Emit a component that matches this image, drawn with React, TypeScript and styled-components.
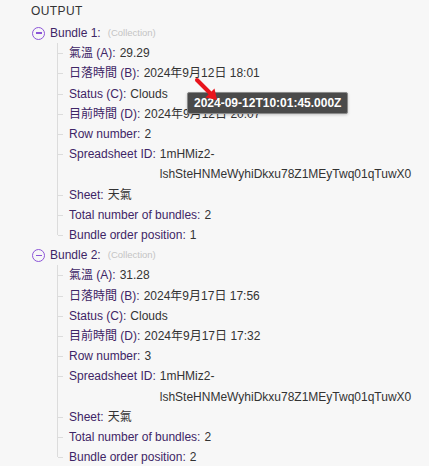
import * as React from 'react';
import styled, { createGlobalStyle } from 'styled-components';

const GlobalStyle = createGlobalStyle`
  html, body {
    margin: 0;
    padding: 0;
    background: #f7f7f7;
  }
  body {
    font-family: 'Liberation Sans', Arial, 'Noto Sans CJK TC', sans-serif;
    font-size: 12px;
    color: #333;
  }
`;

type Field = { label: string; value: string };
type Bundle = { name: string; fields: Field[] };

const bundles: Bundle[] = [
  {
    name: 'Bundle 1:',
    fields: [
      { label: '氣溫 (A):', value: '29.29' },
      { label: '日落時間 (B):', value: '2024年9月12日 18:01' },
      { label: 'Status (C):', value: 'Clouds' },
      { label: '目前時間 (D):', value: '2024年9月12日 20:07' },
      { label: 'Row number:', value: '2' },
      { label: 'Spreadsheet ID:', value: '1mHMiz2-lshSteHNMeWyhiDkxu78Z1MEyTwq01qTuwX0' },
      { label: 'Sheet:', value: '天氣' },
      { label: 'Total number of bundles:', value: '2' },
      { label: 'Bundle order position:', value: '1' },
    ],
  },
  {
    name: 'Bundle 2:',
    fields: [
      { label: '氣溫 (A):', value: '31.28' },
      { label: '日落時間 (B):', value: '2024年9月17日 17:56' },
      { label: 'Status (C):', value: 'Clouds' },
      { label: '目前時間 (D):', value: '2024年9月17日 17:32' },
      { label: 'Row number:', value: '3' },
      { label: 'Spreadsheet ID:', value: '1mHMiz2-lshSteHNMeWyhiDkxu78Z1MEyTwq01qTuwX0' },
      { label: 'Sheet:', value: '天氣' },
      { label: 'Total number of bundles:', value: '2' },
      { label: 'Bundle order position:', value: '2' },
    ],
  },
];

const Panel = styled.div`
  position: relative;
  padding: 1px 8px 0 31px;
  line-height: 20.2px;
`;

const Heading = styled.div`
  font-size: 12px;
  letter-spacing: 0.4px;
  color: #333;
  height: 22px;
  line-height: 20px;
`;

const BundleHead = styled.div`
  display: flex;
  align-items: center;
  height: 20.2px;
`;

const Toggle = styled.span`
  box-sizing: border-box;
  width: 13px;
  height: 13px;
  border: 1.3px solid #8c55d8;
  border-radius: 50%;
  margin-left: 1px;
  margin-right: 5px;
  position: relative;
  &::after {
    content: '';
    position: absolute;
    left: 2.5px;
    right: 2.5px;
    top: 4.7px;
    height: 1.3px;
    background: #8c55d8;
  }
`;

const BundleName = styled.span`
  color: #3e2566;
`;

const Kind = styled.span`
  color: #c4c4c4;
  font-size: 9.5px;
  margin-left: 7px;
`;

const Children = styled.ul`
  list-style: none;
  margin: 0 0 0 26px;
  padding: 0;
`;

const Row = styled.li`
  position: relative;
  display: flex;
  padding-left: 12px;
  &::before {
    content: '';
    position: absolute;
    left: 0;
    top: 0;
    bottom: 0;
    border-left: 1px solid #dcdcdc;
  }
  &:last-child::before {
    bottom: auto;
    height: 10px;
  }
  &::after {
    content: '';
    position: absolute;
    left: 1px;
    top: 10px;
    width: 5px;
    border-top: 1px solid #dcdcdc;
  }
`;

const Label = styled.span`
  color: #3e2566;
  white-space: nowrap;
  flex: none;
  margin-right: 4px;
`;

const Value = styled.span`
  color: #333;
  min-width: 0;
`;

const Tip = styled.div`
  position: absolute;
  left: 187px;
  top: 92px;
  box-sizing: border-box;
  height: 22px;
  padding: 0 6px;
  background: #4a4a4a;
  border: 1px solid #8a8a8a;
  border-radius: 2px;
  color: #fff;
  font-weight: bold;
  font-size: 12px;
  line-height: 20px;
  box-shadow: 0 1px 3px rgba(0, 0, 0, 0.2);
`;

const Arrow = styled.svg`
  position: absolute;
  left: 190px;
  top: 72px;
`;

export default function App() {
  return (
    <>
      <GlobalStyle />
      <Panel>
        <Heading>OUTPUT</Heading>
        {bundles.map(b => (
          <div key={b.name}>
            <BundleHead>
              <Toggle />
              <BundleName>{b.name}</BundleName>
              <Kind>(Collection)</Kind>
            </BundleHead>
            <Children>
              {b.fields.map(f => (
                <Row key={f.label}>
                  <Label>{f.label}</Label>
                  <Value>{f.value}</Value>
                </Row>
              ))}
            </Children>
          </div>
        ))}
        <Tip>2024-09-12T10:01:45.000Z</Tip>
        <Arrow width="34" height="34" viewBox="0 0 34 34">
          <path d="M7 8 L20 21" stroke="#e8141c" strokeWidth="4" strokeLinecap="round" />
          <path d="M15.5 25.5 L27 28 L24.5 16.5 Z" fill="#e8141c" />
        </Arrow>
      </Panel>
    </>
  );
}
